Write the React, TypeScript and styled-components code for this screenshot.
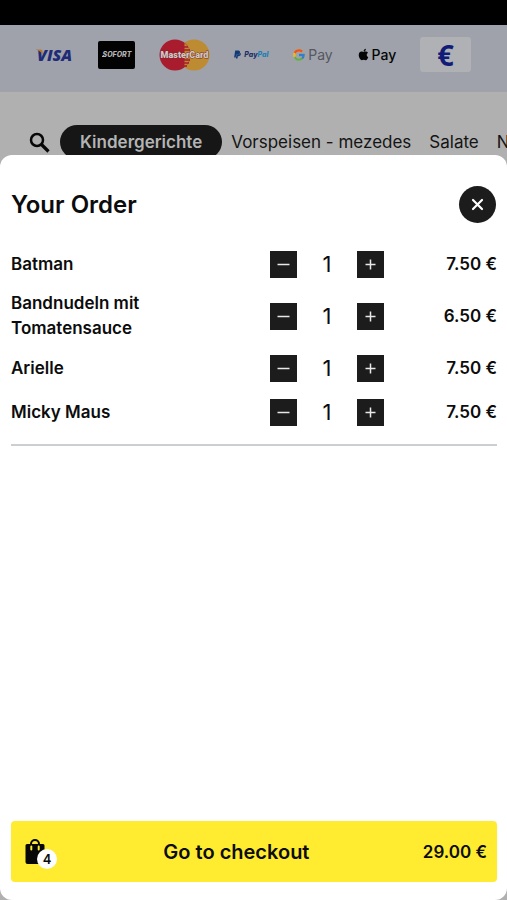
import React, { useState } from "react";
import styled, { createGlobalStyle } from "styled-components";
import { FcGoogle } from "react-icons/fc";
import { FaApple, FaPaypal } from "react-icons/fa";

const GlobalStyle = createGlobalStyle`
  *, *::before, *::after { box-sizing: border-box; }
  body {
    margin: 0;
    background: #b0b0b0;
    color: #0c0c0c;
    font-family: Inter, "Liberation Sans", sans-serif;
  }
  button { font: inherit; color: inherit; border: 0; padding: 0; cursor: pointer; }
`;

const Page = styled.div`
  min-height: 100vh;
  display: flex;
  flex-direction: column;
  overflow: hidden;
`;

const StatusBar = styled.div`
  height: 25px;
  background: #000;
`;

const Payments = styled.ul`
  margin: 0;
  padding: 0 36px 8px;
  height: 67px;
  display: flex;
  align-items: center;
  justify-content: space-between;
  list-style: none;
  background: #9fa2ab;
`;

const Payment = styled.li`
  display: flex;
  align-items: center;
  gap: 2px;
`;

const Logo = styled.svg`
  display: block;
`;

const PayWord = styled.span<{ $color: string; $weight: number }>`
  font-size: 14px;
  line-height: 20px;
  font-weight: ${(p) => p.$weight};
  color: ${(p) => p.$color};
`;

const PayPalWord = styled.span`
  font-size: 7px;
  line-height: 10px;
  font-weight: 800;
  font-style: italic;
  color: #1b2f68;
  b { color: #1e7fb2; font-weight: 800; }
`;

const Cash = styled.span`
  width: 51px;
  height: 35px;
  display: grid;
  place-items: center;
  border-radius: 3px;
  background: #b0b1b4;
  color: #101c78;
  font: 700 29px/35px "Open Sans", sans-serif;
`;

const Categories = styled.nav`
  display: flex;
  align-items: center;
  padding: 33px 0 0 29px;
  white-space: nowrap;
`;

const SearchButton = styled.button`
  display: flex;
  flex: none;
  width: 21px;
  margin-right: 10px;
  background: none;
`;

const Category = styled.a<{ $active?: boolean }>`
  flex: none;
  height: 34px;
  line-height: 34px;
  padding: 0 ${(p) => (p.$active ? 20 : 9)}px;
  border-radius: 17px;
  font-size: 17px;
  font-weight: ${(p) => (p.$active ? 600 : 400)};
  color: ${(p) => (p.$active ? "#b4b4b4" : "#141414")};
  background: ${(p) => (p.$active ? "#161616" : "none")};
  text-decoration: none;
`;

const Sheet = styled.section`
  position: relative;
  flex: 1;
  display: flex;
  flex-direction: column;
  margin-top: -4px;
  padding: 31px 10px 18px 11px;
  border-radius: 12px;
  background: #fff;
`;

const SheetHeader = styled.header`
  display: flex;
  align-items: center;
  justify-content: space-between;
  margin-bottom: 19px;
`;

const Title = styled.h1`
  margin: 0;
  font-size: 24px;
  line-height: 32px;
  font-weight: 600;
`;

const CloseButton = styled.button`
  width: 37px;
  height: 37px;
  margin-right: 1px;
  display: grid;
  place-items: center;
  border-radius: 50%;
  background: #1c1c1c;
`;

const Items = styled.ul`
  margin: 0;
  padding: 0 0 10px;
  list-style: none;
  border-bottom: 2px solid #cdcecf;
`;

const Item = styled.li`
  display: grid;
  grid-template-columns: 1fr 114px 113px;
  align-items: center;
  min-height: 44px;
  padding: 5px 0;
  font-size: 17px;
  line-height: 25px;
  font-weight: 600;
`;

const ItemName = styled.span`
  padding-right: 48px;
`;

const Stepper = styled.div`
  display: flex;
  align-items: center;
  justify-content: space-between;
`;

const StepButton = styled.button`
  width: 27px;
  height: 27px;
  display: grid;
  place-items: center;
  background: #1c1c1c;
`;

const Quantity = styled.output`
  font-size: 22px;
  font-weight: 400;
`;

const Price = styled.span`
  text-align: right;
`;

const Checkout = styled.button`
  display: flex;
  align-items: center;
  justify-content: space-between;
  height: 61px;
  margin-top: auto;
  padding: 0 10px 0 13px;
  border-radius: 4px;
  background: #ffec30;
  color: #0c0c0c;
  font-size: 17px;
  font-weight: 600;
`;

const CheckoutLabel = styled.span`
  font-size: 20px;
`;

const Bag = styled.span`
  position: relative;
  display: flex;
  align-items: center;
  width: 26px;
  height: 34px;
`;

const BagCount = styled.span`
  position: absolute;
  right: -7px;
  bottom: 0;
  width: 20px;
  height: 20px;
  border-radius: 50%;
  background: #fff;
  font-size: 13px;
  line-height: 20px;
  text-align: center;
`;

const VisaLogo = () => (
  <Logo width="38" height="18" viewBox="0 0 38 18" role="img" aria-label="Visa">
    <text x="1" y="15" fontFamily="Open Sans, sans-serif" fontSize="16" fontWeight="800" fontStyle="italic" fill="#202b78">VISA</text>
    <path d="M0 3.500h4.500c1.200 0 1.700.5 1.900 1.500l.8 4C5.700 6.700 3.300 4.700 0 3.800z" fill="#b17b2d" />
  </Logo>
);

const SofortLogo = () => (
  <Logo width="37" height="28" viewBox="0 0 37 28" role="img" aria-label="Sofort">
    <rect width="37" height="28" rx="2" fill="#020202" />
    <text x="19" y="16" textAnchor="middle" fontFamily="Inter, sans-serif" fontSize="7" fontWeight="800" fontStyle="italic" fill="#b4b4b4">SOFORT</text>
    <path d="M4 15.500h4" stroke="#b4b4b4" />
  </Logo>
);

const MasterCardLogo = () => (
  <Logo width="51" height="32" viewBox="0 0 51 32" role="img" aria-label="MasterCard">
    <circle cx="35" cy="16" r="15.500" fill="#bd8b32" />
    <circle cx="16" cy="16" r="15.500" fill="#a91c2d" />
    <path d="M25.500 4a15.500 15.500 0 0 1 0 24" fill="#bd8b32" />
    <path d="M23 8h6M22 11h9M22 21h9M22 24h8M24 27h4" stroke="#a91c2d" strokeWidth="1.500" />
    <text x="25.500" y="19" textAnchor="middle" fontFamily="Roboto, sans-serif" fontSize="9" fontWeight="900" fill="#cfc8c6" stroke="#7a2a2c" strokeWidth=".8" paintOrder="stroke">MasterCard</text>
  </Logo>
);

const SearchIcon = () => (
  <svg width="21" height="21" viewBox="0 0 21 21" fill="none" stroke="#080808" aria-hidden="true">
    <circle cx="8" cy="8" r="6" strokeWidth="2.500" />
    <path d="M12.500 12.500l7 7" strokeWidth="3.200" />
  </svg>
);

const CloseIcon = () => (
  <svg width="13" height="13" viewBox="0 0 13 13" stroke="#fff" strokeWidth="2.200" strokeLinecap="round" aria-hidden="true">
    <path d="M2 2l9 9M11 2l-9 9" />
  </svg>
);

const StepIcon = ({ plus }: { plus?: boolean }) => (
  <svg width="13" height="13" viewBox="0 0 13 13" stroke="#e8e8e8" strokeWidth="1.500" aria-hidden="true">
    <path d={plus ? "M1.500 6.500h10M6.500 1.500v10" : "M.5 6.500h12"} />
  </svg>
);

const BagIcon = () => (
  <svg width="24" height="26" viewBox="0 0 24 26" fill="none" aria-hidden="true">
    <path d="M3 5h16a1.500 1.500 0 0 1 1.500 1.500V23a2 2 0 0 1-2 2h-15a2 2 0 0 1-2-2V6.500A1.500 1.500 0 0 1 3 5z" fill="#080808" />
    <path d="M7 7V5a4 4 0 0 1 8 0v2" stroke="#080808" strokeWidth="2" />
    <path d="M7.300 7.500v3M14.700 7.500v3" stroke="#ffec30" strokeWidth="2" strokeLinecap="round" />
  </svg>
);

const menu = ["Kindergerichte", "Vorspeisen - mezedes", "Salate", "Nudeln"];

const order = [
  { name: "Batman", price: 7.5 },
  { name: "Bandnudeln mit Tomatensauce", price: 6.5 },
  { name: "Arielle", price: 7.5 },
  { name: "Micky Maus", price: 7.5 },
];

const euro = (value: number) => `${value.toFixed(2)} €`;

export default function App() {
  const [counts, setCounts] = useState(order.map(() => 1));
  const change = (index: number, by: number) =>
    setCounts((all) => all.map((n, i) => (i === index ? Math.max(0, n + by) : n)));
  const total = order.reduce((sum, item, i) => sum + item.price * counts[i], 0);
  const pieces = counts.reduce((sum, n) => sum + n, 0);

  return (
    <Page>
      <GlobalStyle />
      <StatusBar />
      <Payments aria-label="Payment methods">
        <Payment><VisaLogo /></Payment>
        <Payment><SofortLogo /></Payment>
        <Payment><MasterCardLogo /></Payment>
        <Payment>
          <FaPaypal size={9} color="#123a78" />
          <PayPalWord>Pay<b>Pal</b></PayPalWord>
        </Payment>
        <Payment>
          <FcGoogle size={14} opacity={0.8} />
          <PayWord $color="#55585e" $weight={400}>Pay</PayWord>
        </Payment>
        <Payment>
          <FaApple size={13} color="#050505" />
          <PayWord $color="#050505" $weight={500}>Pay</PayWord>
        </Payment>
        <Payment><Cash>€</Cash></Payment>
      </Payments>
      <Categories aria-label="Menu categories">
        <SearchButton type="button" aria-label="Search"><SearchIcon /></SearchButton>
        {menu.map((name, i) => (
          <Category key={name} href="#" $active={i === 0}>{name}</Category>
        ))}
      </Categories>
      <Sheet role="dialog" aria-labelledby="order-title">
        <SheetHeader>
          <Title id="order-title">Your Order</Title>
          <CloseButton type="button" aria-label="Close"><CloseIcon /></CloseButton>
        </SheetHeader>
        <Items>
          {order.map((item, i) => (
            <Item key={item.name}>
              <ItemName>{item.name}</ItemName>
              <Stepper>
                <StepButton type="button" aria-label={`Remove one ${item.name}`} onClick={() => change(i, -1)}>
                  <StepIcon />
                </StepButton>
                <Quantity>{counts[i]}</Quantity>
                <StepButton type="button" aria-label={`Add one ${item.name}`} onClick={() => change(i, 1)}>
                  <StepIcon plus />
                </StepButton>
              </Stepper>
              <Price>{euro(item.price)}</Price>
            </Item>
          ))}
        </Items>
        <Checkout type="button">
          <Bag>
            <BagIcon />
            <BagCount>{pieces}</BagCount>
          </Bag>
          <CheckoutLabel>Go to checkout</CheckoutLabel>
          <span>{euro(total)}</span>
        </Checkout>
      </Sheet>
    </Page>
  );
}
